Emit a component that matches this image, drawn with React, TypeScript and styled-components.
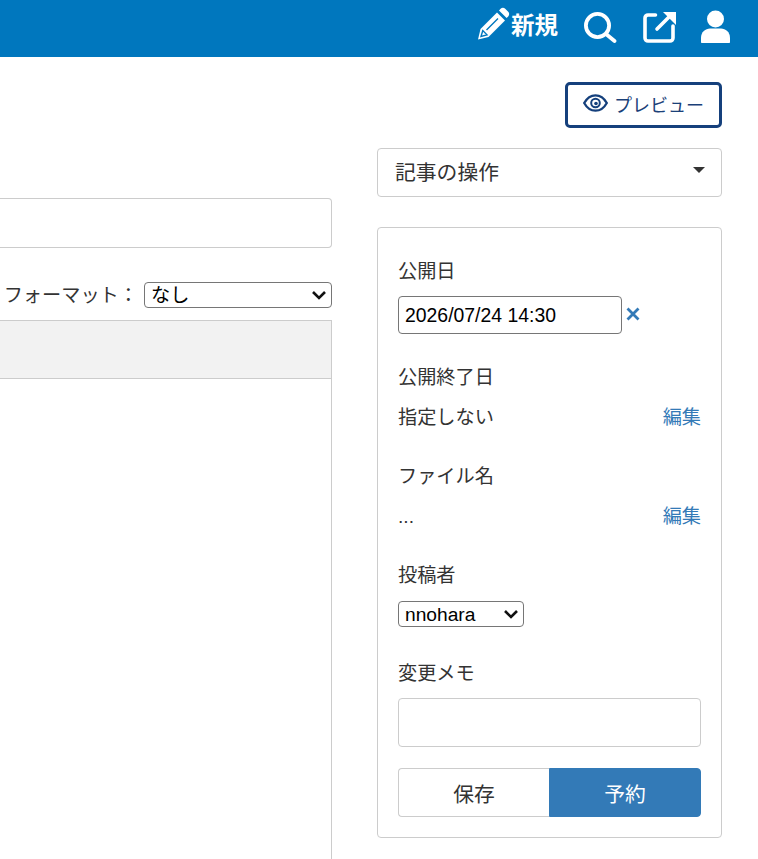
import React from 'react';
import styled, { createGlobalStyle } from 'styled-components';

const chevron =
  "url(\"data:image/svg+xml,%3Csvg xmlns='http://www.w3.org/2000/svg' width='16' height='10' viewBox='0 0 16 10'%3E%3Cpath d='M2 2l6 6 6-6' fill='none' stroke='%23111' stroke-width='2.6'/%3E%3C/svg%3E\")";

const GlobalStyle = createGlobalStyle`
  html, body {
    margin: 0;
    padding: 0;
    height: 100%;
    overflow: hidden;
    background: #fff;
  }
  body {
    font-family: "Liberation Sans", "Noto Sans CJK JP", sans-serif;
    font-size: 19.2px;
    line-height: 27px;
    color: #333;
  }
  * {
    box-sizing: border-box;
  }
`;

const Header = styled.header`
  height: 57px;
  background: #0077be;
  display: flex;
  align-items: center;
  justify-content: flex-end;
  padding: 0 27px 4px 0;
`;

const NewLink = styled.a`
  display: flex;
  align-items: center;
  gap: 1px;
  color: #fff;
  font-size: 23.5px;
  font-weight: 700;
  margin-right: 26px;

  & > svg {
    margin-top: -6px;
  }
`;

const HeaderIcon = styled.svg<{ $gap?: number; $drop?: number }>`
  display: block;
  margin-left: ${(p) => p.$gap || 0}px;
  margin-top: ${(p) => p.$drop || 0}px;
`;

const Main = styled.main`
  display: grid;
  grid-template-columns: 332px 345px;
  column-gap: 45px;
`;

const LeftColumn = styled.div`
  padding-top: 141px;
`;

const TitleBox = styled.div`
  height: 50px;
  border: 1px solid #ccc;
  border-left: none;
  border-radius: 0 4px 4px 0;
`;

const FormatRow = styled.div`
  display: flex;
  align-items: center;
  justify-content: flex-end;
  height: 26px;
  margin-top: 34px;
`;

const FormatLabel = styled.label`
  margin-right: 6px;
  white-space: nowrap;
`;

const NativeSelect = styled.select<{ $width: number }>`
  appearance: none;
  display: block;
  width: ${(p) => p.$width}px;
  height: 26px;
  font-family: "Liberation Sans", "Noto Sans CJK JP", sans-serif;
  font-size: 19.2px;
  color: #000;
  background: #fff ${chevron} no-repeat right 4px center;
  border: 1px solid #767676;
  border-radius: 4px;
  padding: 0 0 0 6px;
`;

const Editor = styled.div`
  margin-top: 12px;
  height: 539px;
  border-right: 1px solid #ccc;
`;

const Toolbar = styled.div`
  height: 59px;
  background: #f2f2f2;
  border-top: 1px solid #ccc;
  border-bottom: 1px solid #ccc;
`;

const RightColumn = styled.aside`
  padding-top: 25px;
`;

const PreviewRow = styled.div`
  display: flex;
  justify-content: flex-end;
`;

const PreviewButton = styled.button`
  width: 157px;
  height: 46px;
  display: flex;
  align-items: center;
  justify-content: center;
  gap: 6px;
  background: #fff;
  color: #1a4078;
  border: 3px solid #15407c;
  border-radius: 5px;
  font-family: inherit;
  font-size: 18px;
  padding: 0 0 2px;

  & > svg {
    margin-bottom: 2px;
  }
`;

const ActionsDropdown = styled.div`
  margin-top: 20px;
  height: 49px;
  display: flex;
  align-items: center;
  justify-content: space-between;
  padding: 0 16px 0 17px;
  border: 1px solid #ccc;
  border-radius: 4px;
  font-size: 20.8px;
`;

const Caret = styled.span`
  width: 0;
  height: 0;
  margin-bottom: 6px;
  border-left: 6px solid transparent;
  border-right: 6px solid transparent;
  border-top: 6px solid #333;
`;

const Panel = styled.section`
  margin-top: 30px;
  height: 611px;
  border: 1px solid #ccc;
  border-radius: 4px;
  padding: 30px 20px 20px;
`;

const Field = styled.div<{ $top?: number; $gap?: number }>`
  margin-top: ${(p) => p.$top || 0}px;

  & > label {
    display: block;
    margin-bottom: ${(p) => p.$gap ?? 13}px;
  }
`;

const DateRow = styled.div`
  display: flex;
  align-items: center;
`;

const DateInput = styled.input`
  width: 224px;
  height: 38px;
  padding: 0 6px;
  font-family: "Liberation Sans", sans-serif;
  font-size: 19.4px;
  color: #000;
  border: 1px solid #767676;
  border-radius: 4px;
`;

const ClearIcon = styled.svg`
  margin: 0 0 2px 4px;
`;

const ValueRow = styled.div`
  display: flex;
  justify-content: space-between;
`;

const EditLink = styled.a`
  color: #337ab7;
`;

const Memo = styled.textarea`
  display: block;
  width: 100%;
  height: 49px;
  border: 1px solid #ccc;
  border-radius: 4px;
  resize: none;
`;

const ButtonGroup = styled.div`
  display: grid;
  grid-template-columns: 151px 152px;
  margin-top: 21px;
`;

const GroupButton = styled.button<{ $primary?: boolean }>`
  height: 49px;
  padding: 0;
  font-family: inherit;
  font-size: 20.8px;
  color: ${(p) => (p.$primary ? '#fff' : '#333')};
  background: ${(p) => (p.$primary ? '#337ab7' : '#fff')};
  border: 1px solid ${(p) => (p.$primary ? '#337ab7' : '#ccc')};
  border-right-width: ${(p) => (p.$primary ? 1 : 0)}px;
  border-radius: ${(p) => (p.$primary ? '0 4px 4px 0' : '4px 0 0 4px')};
`;

const App = () => {
  return (
    <>
      <GlobalStyle />
      <Header>
        <NewLink>
          <svg width="33" height="33" viewBox="0 0 33 33" fill="#fff">
            <path d="M22 3.400l1.600-1.600c1.300-1.300 3.300-1.300 4.600 0l3 3c1.300 1.300 1.300 3.300 0 4.600l-1.600 1.600z" />
            <path d="M20 5.400l8 8-16.500 16.500L1 32.500l2.500-10.500z" />
            <path d="M5.800 23.500l-1.800 6 6-1.700zM21 11.500L9.500 23" fill="none" stroke="#0077be" strokeWidth="1.400" />
          </svg>
          新規
        </NewLink>
        <HeaderIcon $drop={2} width="33" height="31" viewBox="0 0 33 31" fill="none" stroke="#fff">
          <circle cx="13.5" cy="13.5" r="11.6" strokeWidth="3.8" />
          <path d="M22 22l8.500 7" strokeWidth="3.800" strokeLinecap="round" />
        </HeaderIcon>
        <HeaderIcon $gap={26} width="33" height="33" viewBox="0 0 33 33" fill="none" stroke="#fff" strokeWidth="3.6">
          <path d="M12.500 5H5a3 3 0 0 0-3 3v20a3 3 0 0 0 3 3h22a3 3 0 0 0 3-3v-12" strokeLinecap="round" />
          <path d="M14 19L27 6" strokeLinecap="round" />
          <path d="M20 2H33V15z" fill="#fff" stroke="none" />
        </HeaderIcon>
        <HeaderIcon $gap={24} width="31" height="33" viewBox="0 0 31 33" fill="#fff">
          <circle cx="15.5" cy="9" r="8.5" />
          <path d="M1 32v-4c0-6 4.500-9.500 9-9.500h11c4.500 0 9 3.500 9 9.500v4c0 .6-.4 1-1 1H2c-.6 0-1-.4-1-1z" />
        </HeaderIcon>
      </Header>
      <Main>
        <LeftColumn>
          <TitleBox />
          <FormatRow>
            <FormatLabel>フォーマット：</FormatLabel>
            <NativeSelect $width={188} defaultValue="なし">
              <option>なし</option>
            </NativeSelect>
          </FormatRow>
          <Editor>
            <Toolbar />
          </Editor>
        </LeftColumn>
        <RightColumn>
          <PreviewRow>
            <PreviewButton>
              <svg width="25" height="18" viewBox="0 0 25 18" fill="none" stroke="#15407c" strokeWidth="2.300">
                <path d="M1.200 9c2.700-4.900 6.600-7.700 11.300-7.700S21.100 4.100 23.800 9c-2.700 4.900-6.600 7.700-11.300 7.700S3.900 13.900 1.200 9z" />
                <circle cx="12.500" cy="9" r="4.300" strokeWidth="2" />
                <circle cx="13" cy="9.500" r="1.800" fill="#15407c" stroke="none" />
              </svg>
              プレビュー
            </PreviewButton>
          </PreviewRow>
          <ActionsDropdown>
            記事の操作
            <Caret />
          </ActionsDropdown>
          <Panel>
            <Field $gap={11}>
              <label>公開日</label>
              <DateRow>
                <DateInput defaultValue="2026/07/24 14:30" />
                <ClearIcon width="14" height="14" viewBox="0 0 14 14" stroke="#337ab7" strokeWidth="2.800">
                  <path d="M1.500 1.500l11 11M12.500 1.500l-11 11" />
                </ClearIcon>
              </DateRow>
            </Field>
            <Field $top={30}>
              <label>公開終了日</label>
              <ValueRow>
                <span>指定しない</span>
                <EditLink>編集</EditLink>
              </ValueRow>
            </Field>
            <Field $top={32}>
              <label>ファイル名</label>
              <ValueRow>
                <span>...</span>
                <EditLink>編集</EditLink>
              </ValueRow>
            </Field>
            <Field $top={32} $gap={12}>
              <label>投稿者</label>
              <NativeSelect $width={126} defaultValue="nnohara">
                <option>nnohara</option>
              </NativeSelect>
            </Field>
            <Field $top={33} $gap={11}>
              <label>変更メモ</label>
              <Memo />
            </Field>
            <ButtonGroup>
              <GroupButton>保存</GroupButton>
              <GroupButton $primary>予約</GroupButton>
            </ButtonGroup>
          </Panel>
        </RightColumn>
      </Main>
    </>
  );
};

export default App;
